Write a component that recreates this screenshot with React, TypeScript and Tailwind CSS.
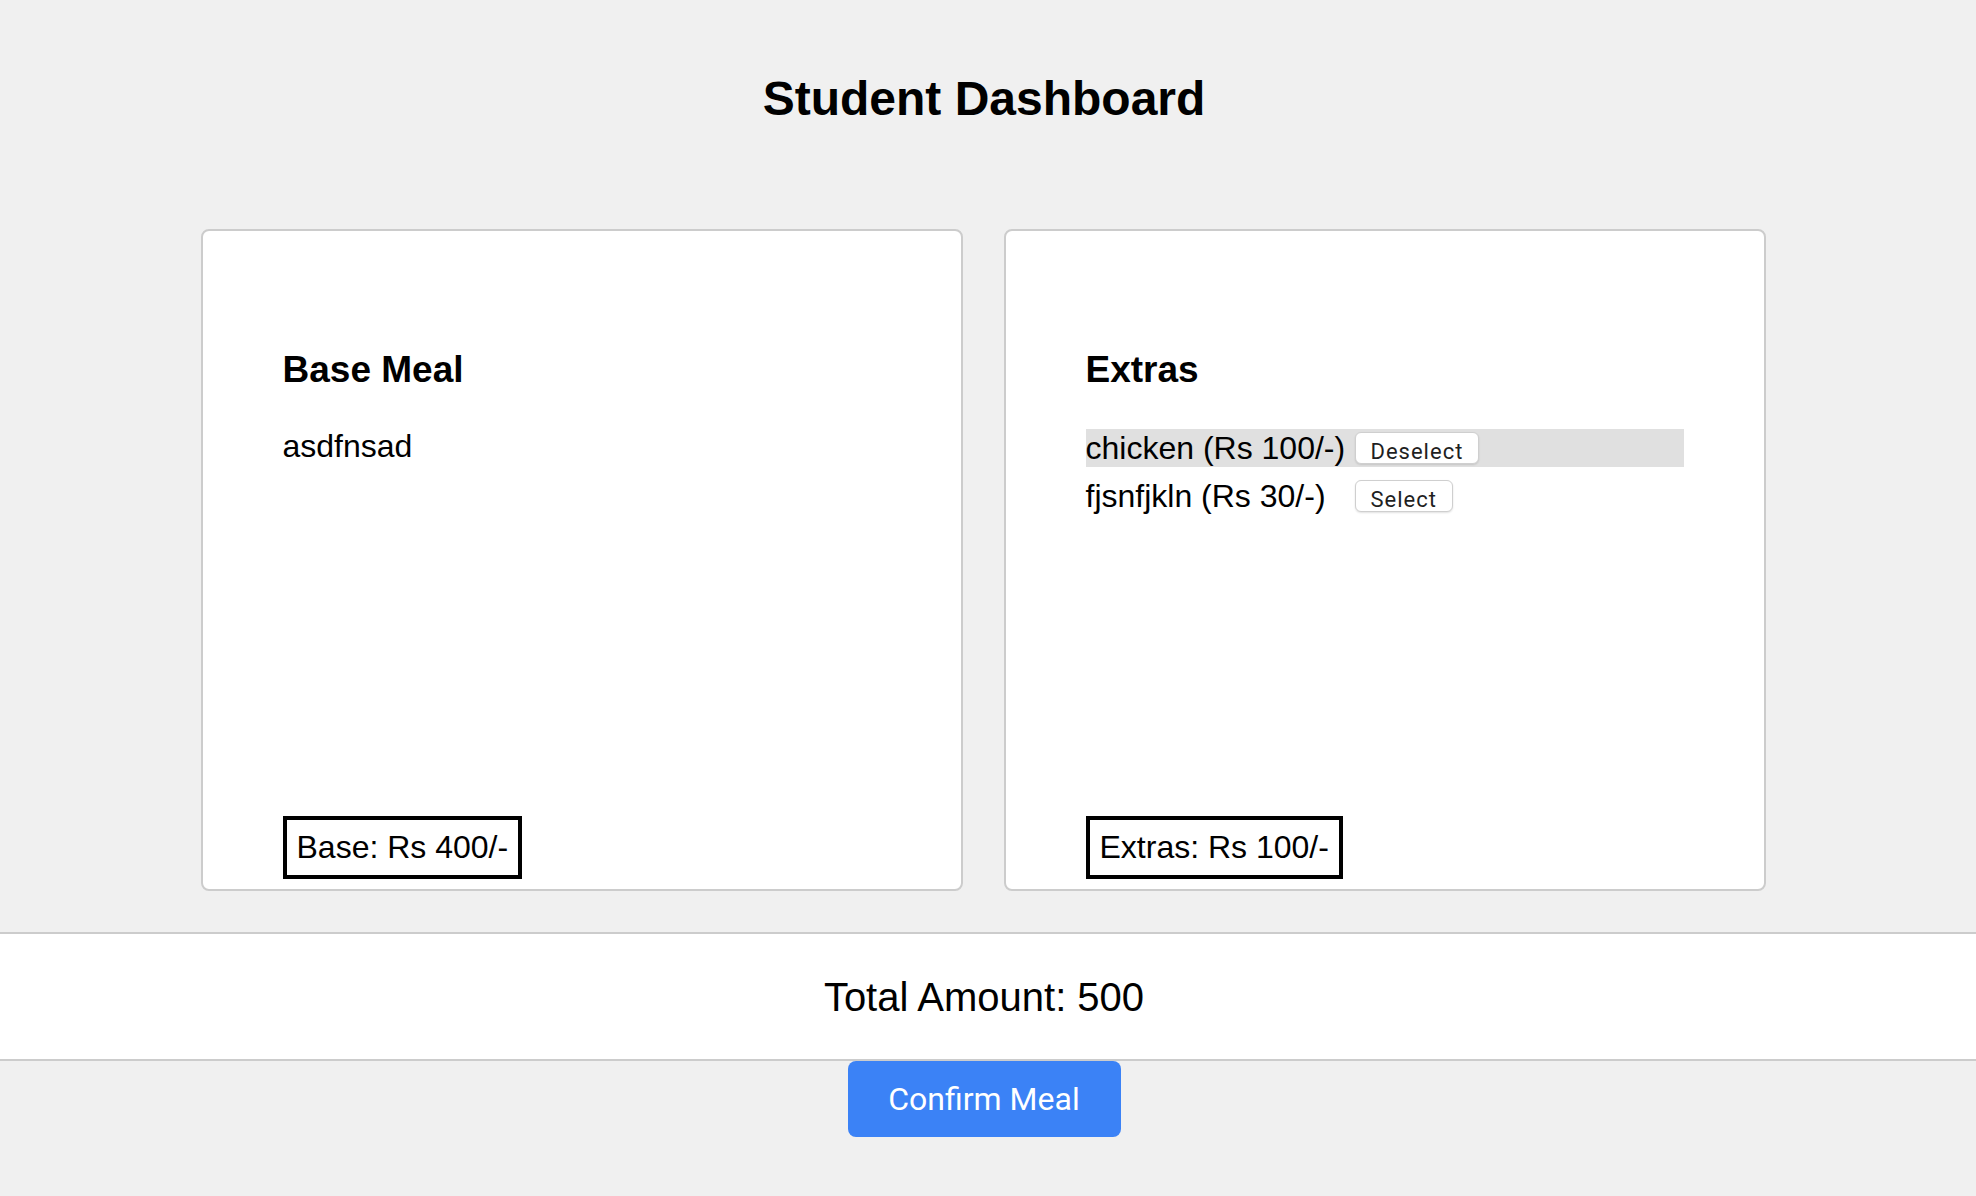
import { useState } from "react";

type Extra = {
  id: number;
  name: string;
  price: number;
};

const baseMeal = { name: "asdfnsad", price: 400 };

const extras: Extra[] = [
  { id: 1, name: "chicken", price: 100 },
  { id: 2, name: "fjsnfjkln", price: 30 },
];

export default function App() {
  const [selected, setSelected] = useState<number[]>([1]);

  const toggle = (id: number) =>
    setSelected((s) => (s.includes(id) ? s.filter((x) => x !== id) : [...s, id]));

  const extrasTotal = extras
    .filter((e) => selected.includes(e.id))
    .reduce((sum, e) => sum + e.price, 0);

  return (
    <div className="min-h-screen bg-[#f0f0f0] text-black font-['Liberation_Sans',Arial,sans-serif]">
      <div className="pr-2 pt-[71px]">
        <h1 className="text-center text-[48px] leading-[55px] font-bold">Student Dashboard</h1>
      </div>

      <div className="pr-[10px] mt-[103px] flex justify-center gap-[41px]">
        <div className="w-[762px] h-[662px] bg-white border-2 border-[#cccccc] rounded-[8px] pt-[80px] px-[80px] pb-[10px] flex flex-col">
          <h3 className="mt-[37px] mb-[37px] text-[37px] leading-[43px] font-bold">Base Meal</h3>
          <p className="text-[32px] leading-[37px]">{baseMeal.name}</p>
          <div className="mt-auto self-start border-4 border-black px-[10px] py-[9px] text-[32px] leading-[37px]">
            Base: Rs {baseMeal.price}/-
          </div>
        </div>

        <div className="w-[762px] h-[662px] bg-white border-2 border-[#cccccc] rounded-[8px] pt-[80px] px-[80px] pb-[10px] flex flex-col">
          <h3 className="mt-[37px] mb-[38px] text-[37px] leading-[43px] font-bold">Extras</h3>
          <div className="flex flex-col gap-[10px]">
            {extras.map((e) => {
              const on = selected.includes(e.id);
              return (
                <div
                  key={e.id}
                  className={`h-[38px] flex items-center text-[32px] leading-[37px] ${on ? "bg-[#e0e0e0]" : ""}`}
                >
                  <span className="min-w-[260px]">
                    {e.name} (Rs {e.price}/-)
                  </span>
                  <button
                    onClick={() => toggle(e.id)}
                    className="ml-[9px] h-[32px] px-[15px] bg-white border border-[#cfcfcf] rounded-[6px] shadow-[0_1px_2px_rgba(0,0,0,0.12)] text-[22px] tracking-[1px] text-[#1f1f1f] font-['Roboto',sans-serif]"
                  >
                    {on ? "Deselect" : "Select"}
                  </button>
                </div>
              );
            })}
          </div>
          <div className="mt-auto self-start border-4 border-black px-[10px] py-[9px] text-[32px] leading-[37px]">
            Extras: Rs {extrasTotal}/-
          </div>
        </div>
      </div>

      <div className="mt-[41px] h-[129px] bg-white border-y-2 border-[#cccccc] flex items-center justify-center pr-2">
        <span className="text-[40px] leading-[46px]">Total Amount: {baseMeal.price + extrasTotal}</span>
      </div>

      <div className="flex justify-center pr-2">
        <button className="w-[273px] h-[76px] bg-[#3b82f6] text-white rounded-[8px] text-[32px] font-['Roboto',sans-serif]">
          Confirm Meal
        </button>
      </div>
    </div>
  );
}
